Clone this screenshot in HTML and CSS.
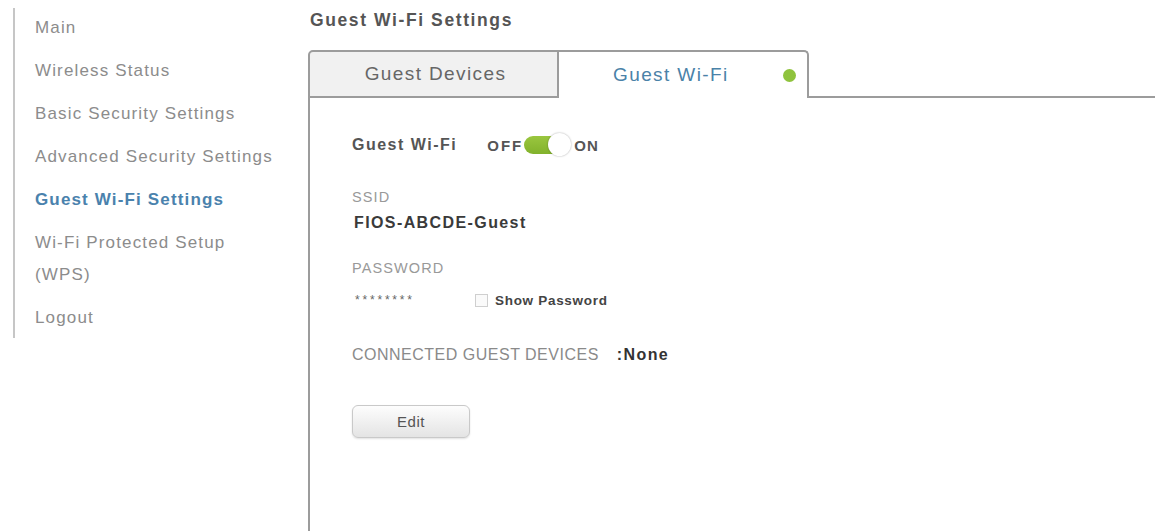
FILE: index.html
```html
<!DOCTYPE html>
<html lang="en">
<head>
<meta charset="utf-8">
<title>Guest Wi-Fi Settings</title>
<link rel="stylesheet" href="styles.css">
</head>
<body>
<div class="page">
  <aside class="sidebar">
    <nav class="nav">
      <a class="nav-item">Main</a>
      <a class="nav-item">Wireless Status</a>
      <a class="nav-item">Basic Security Settings</a>
      <a class="nav-item">Advanced Security Settings</a>
      <a class="nav-item active">Guest Wi-Fi Settings</a>
      <a class="nav-item">Wi-Fi Protected Setup<br>(WPS)</a>
      <a class="nav-item">Logout</a>
    </nav>
  </aside>
  <main class="main">
    <h1 class="title">Guest Wi-Fi Settings</h1>
    <div class="tabs">
      <div class="tab tab-devices">Guest Devices</div>
      <div class="tab tab-wifi"><span class="tab-label">Guest Wi-Fi</span><span class="dot"></span></div>
      <div class="tab-fill"></div>
    </div>
    <section class="panel">
      <div class="row-toggle">
        <span class="label-strong">Guest Wi-Fi</span>
        <span class="switch-text off">OFF</span>
        <span class="switch"><span class="knob"></span></span>
        <span class="switch-text on">ON</span>
      </div>
      <div class="field-label ssid-label">SSID</div>
      <div class="field-value">FIOS-ABCDE-Guest</div>
      <div class="field-label pw-label">PASSWORD</div>
      <div class="pw-row">
        <span class="stars">********</span>
        <span class="checkbox"></span>
        <span class="show-pw">Show Password</span>
      </div>
      <div class="connected">
        <span class="conn-label">CONNECTED GUEST DEVICES</span>
        <span class="conn-value">:None</span>
      </div>
      <button class="btn-edit">Edit</button>
    </section>
  </main>
</div>
</body>
</html>
```

FILE: styles.css
```css
html, body {
  margin: 0;
  padding: 0;
  background: #ffffff;
}
body {
  font-family: "Liberation Sans", Arial, Helvetica, sans-serif;
  color: #555;
  width: 1159px;
  height: 531px;
  overflow: hidden;
}
.page {
  display: flex;
  padding-top: 8px;
}
.sidebar {
  margin-left: 13px;
  width: 293px;
  height: 330px;
  border-left: 2px solid #c6c6c6;
  flex: none;
}
.nav {
  display: flex;
  flex-direction: column;
  gap: 11px;
  padding-top: 4px;
  padding-left: 20px;
}
.nav-item {
  font-size: 17px;
  line-height: 32px;
  letter-spacing: 1.15px;
  color: #8c8c8c;
}
.nav-item.active {
  color: #4a82ad;
  font-weight: bold;
}
.main {
  flex: 1;
  padding-right: 4px;
}
.title {
  margin: 0;
  padding-left: 2px;
  font-size: 17.5px;
  line-height: 24px;
  font-weight: bold;
  letter-spacing: 1.6px;
  color: #555;
}
.tabs {
  display: flex;
  margin-top: 18px;
  height: 48px;
}
.tab {
  box-sizing: border-box;
  height: 48px;
  display: flex;
  align-items: center;
  font-size: 19px;
  letter-spacing: 1.4px;
}
.tab-devices {
  width: 251px;
  background: #f1f1f1;
  border: 2px solid #9c9c9c;
  border-radius: 5px 0 0 0;
  justify-content: center;
  color: #666;
  padding-left: 4px;
}
.tab-wifi {
  width: 250px;
  border-top: 2px solid #9c9c9c;
  border-right: 2px solid #9c9c9c;
  border-radius: 0 5px 0 0;
  color: #4a82a8;
  padding-left: 54px;
}
.tab-label {
  flex: none;
}
.dot {
  width: 13px;
  height: 13px;
  border-radius: 50%;
  background: #8fc33d;
  margin-left: 54px;
}
.tab-fill {
  flex: 1;
  border-bottom: 2px solid #9c9c9c;
}
.panel {
  border-left: 2px solid #9c9c9c;
  height: 440px;
  padding-top: 35px;
  padding-left: 42px;
  box-sizing: border-box;
}
.row-toggle {
  display: flex;
  align-items: center;
  height: 24px;
}
.label-strong {
  font-size: 16px;
  font-weight: bold;
  letter-spacing: 1.5px;
  color: #555;
}
.switch-text {
  font-size: 15px;
  font-weight: bold;
  color: #555;
}
.switch-text.off {
  margin-left: 30px;
  letter-spacing: 2px;
}
.switch-text.on {
  margin-left: 5px;
  letter-spacing: 1.2px;
}
.switch {
  position: relative;
  width: 45px;
  height: 18px;
  border-radius: 9px;
  background: linear-gradient(#9ac63f, #82b22c);
  flex: none;
  margin-left: 1px;
}
.knob {
  position: absolute;
  right: -2px;
  top: -3px;
  width: 23px;
  height: 23px;
  border-radius: 50%;
  background: #fff;
  box-shadow: 0 0 2px rgba(0,0,0,0.35);
}
.field-label {
  font-size: 14.5px;
  line-height: 18px;
  color: #999;
  letter-spacing: 1.1px;
}
.ssid-label {
  margin-top: 31px;
}
.field-value {
  margin-top: 7px;
  margin-left: 2px;
  font-size: 16px;
  line-height: 20px;
  font-weight: bold;
  letter-spacing: 1.4px;
  color: #3a3a3a;
}
.pw-label {
  margin-top: 26px;
}
.pw-row {
  margin-top: 13px;
  display: flex;
  align-items: center;
  height: 20px;
}
.stars {
  margin-left: 3px;
  font-size: 12px;
  letter-spacing: 2.8px;
  color: #666;
  width: 120px;
}
.checkbox {
  width: 11px;
  height: 11px;
  border: 1px solid #cfcfcf;
  background: #fafafa;
  flex: none;
}
.show-pw {
  margin-left: 7px;
  font-size: 13.5px;
  font-weight: bold;
  letter-spacing: 0.7px;
  color: #444;
}
.connected {
  margin-top: 35px;
  display: flex;
  align-items: center;
  height: 20px;
}
.conn-label {
  font-size: 16px;
  letter-spacing: 0.5px;
  color: #8a8a8a;
}
.conn-value {
  margin-left: 18px;
  font-size: 16px;
  font-weight: bold;
  letter-spacing: 1.4px;
  color: #333;
}
.btn-edit {
  display: block;
  margin-top: 40px;
  width: 118px;
  height: 33px;
  border: 1px solid #c9c9c9;
  border-radius: 6px;
  background: linear-gradient(#fdfdfd, #e4e4e4);
  box-shadow: 0 1px 2px rgba(0,0,0,0.12);
  font-family: "Liberation Sans", Arial, sans-serif;
  font-size: 15px;
  color: #555;
  letter-spacing: 0.5px;
  padding: 0;
}
```
